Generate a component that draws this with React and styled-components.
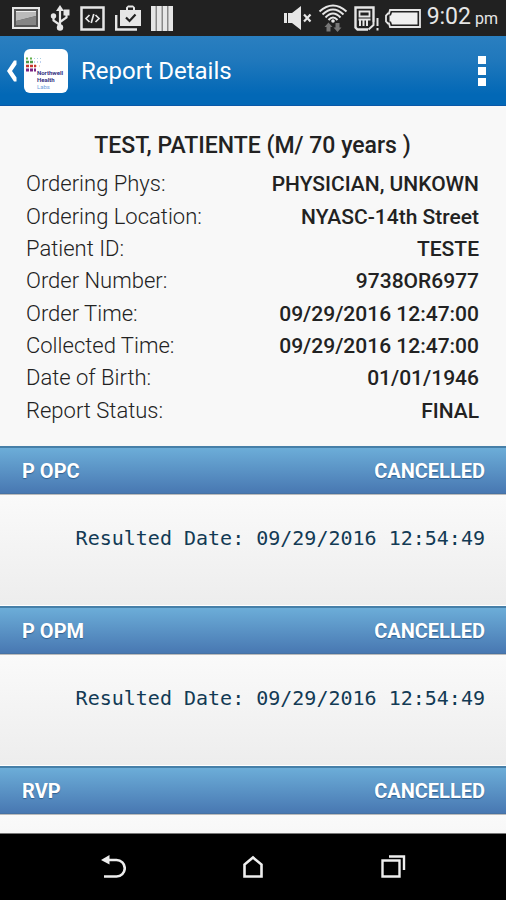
import React from "react";
import styled, { createGlobalStyle } from "styled-components";

const GlobalStyle = createGlobalStyle`
  * { box-sizing: border-box; }
  body {
    margin: 0;
    background: #000;
    font-family: Roboto, "Noto Sans", sans-serif;
  }
  button {
    border: 0;
    padding: 0;
    background: none;
    color: inherit;
    font: inherit;
    cursor: pointer;
  }
`;

const Screen = styled.div`
  display: flex;
  flex-direction: column;
  height: 100vh;
  background: #f8f8f8;
`;

const StatusBar = styled.div`
  display: flex;
  flex: none;
  align-items: center;
  justify-content: space-between;
  height: 36px;
  padding: 0 8px 0 12px;
  background: #212121;
  color: #e6e6e6;
`;

const StatusGroup = styled.div`
  display: flex;
  align-items: center;
  gap: ${(props) => props.$gap};

  svg {
    display: block;
  }
`;

const Clock = styled.span`
  font-size: 23px;
  line-height: 32px;

  small {
    margin-left: 4px;
    font-size: 16px;
  }
`;

const Header = styled.header`
  display: flex;
  flex: none;
  align-items: center;
  height: 70px;
  padding: 0 16px 0 6px;
  border-bottom: 1px solid #0a58a8;
  background: linear-gradient(#2a7fc0, #2078bc 35%, #0268b6 85%);
  color: #fff;
`;

const BackButton = styled.button`
  display: flex;
  align-items: center;
  gap: 6px;
`;

const Logo = styled.span`
  display: grid;
  align-content: start;
  width: 44px;
  height: 44px;
  padding: 8px 2px;
  border-radius: 6px;
  background: #fff;
`;

const LogoText = styled.span`
  display: grid;
  margin: -4px 0 0 11px;
  color: #33307f;
  font-size: 6px;
  font-weight: 700;
  line-height: 7px;
  text-align: left;

  em {
    color: #6fa0dc;
    font-style: normal;
    font-weight: 400;
  }
`;

const Title = styled.h1`
  flex: 1;
  margin: 0 0 0 13px;
  font-size: 24px;
  font-weight: 400;
  line-height: 32px;
`;

const MenuButton = styled.button`
  display: grid;
  gap: 3px;
  padding: 0 4px;

  i {
    width: 8px;
    height: 8px;
    background: #fff;
  }
`;

const Content = styled.main`
  flex: 1;
  min-height: 0;
  overflow: hidden;
`;

const Patient = styled.section`
  padding: 24px 27px 19px 26px;
  color: #222;
`;

const PatientName = styled.h2`
  margin: 0;
  font-size: 23px;
  font-weight: 500;
  line-height: 32px;
  text-align: center;
`;

const Details = styled.dl`
  display: grid;
  grid-auto-rows: 1fr;
  min-height: 259px;
  margin: 6px 0 0;
`;

const DetailRow = styled.div`
  display: flex;
  align-items: center;
  justify-content: space-between;
  line-height: 32px;

  dt {
    color: #222;
    font-size: 22px;
    font-weight: 300;
  }

  dd {
    margin: 0;
    font-size: 21px;
    font-weight: 500;
  }
`;

const ResultBar = styled.h3`
  display: flex;
  align-items: center;
  justify-content: space-between;
  height: 48px;
  margin: 0;
  padding: 0 21px 0 22px;
  border-top: 2px solid #467fa8;
  border-bottom: 1px solid #4672a4;
  background: linear-gradient(#6cadd8, #4878b2);
  color: #fff;
  font-size: 20px;
  font-weight: 700;
  text-shadow: 0 1px 1px #2d5f8f;
`;

const ResultBody = styled.p`
  height: 112px;
  margin: 0;
  padding: 27px 21px;
  border-top: 1px solid #bbb;
  border-bottom: 1px solid #fff;
  background: linear-gradient(#fafafa, #ededed);
  color: #123a54;
  font-family: "DejaVu Sans Mono", "Liberation Mono", monospace;
  font-size: 20px;
  line-height: 32px;
  text-align: right;
  white-space: nowrap;
`;

const NavBar = styled.nav`
  display: flex;
  flex: none;
  align-items: center;
  justify-content: center;
  gap: 114px;
  height: 67px;
  border-top: 1px solid #777;
  background: #000;
  color: #eee;

  svg {
    display: block;
  }
`;

const details = [
  ["Ordering Phys:", "PHYSICIAN, UNKOWN"],
  ["Ordering Location:", "NYASC-14th Street"],
  ["Patient ID:", "TESTE"],
  ["Order Number:", "9738OR6977"],
  ["Order Time:", "09/29/2016 12:47:00"],
  ["Collected Time:", "09/29/2016 12:47:00"],
  ["Date of Birth:", "01/01/1946"],
  ["Report Status:", "FINAL"],
];

const results = [
  { name: "P OPC", status: "CANCELLED", date: "09/29/2016 12:54:49" },
  { name: "P OPM", status: "CANCELLED", date: "09/29/2016 12:54:49" },
  { name: "RVP", status: "CANCELLED" },
];

const ScreenIcon = () => (
  <svg width="28" height="22" viewBox="0 0 28 22">
    <rect x="1" y="1" width="26" height="20" fill="#555" stroke="#e6e6e6" strokeWidth="2" />
    <path d="M4 4h20v5L4 14z" fill="#bbb" />
    <path d="M4 14l20-5v9H4z" fill="#858585" />
    <path d="M4 4.5h20" stroke="#eee" />
  </svg>
);

const UsbIcon = () => (
  <svg width="20" height="26" viewBox="0 0 20 26" fill="none" stroke="currentColor" strokeWidth="2.2">
    <path d="M10 5v17M10 20l-6.500-4.500V11M10 17l6.500-4.500V8" />
    <path d="M10 0l4 6H6z" fill="currentColor" stroke="none" />
    <circle cx="10" cy="22.5" r="3.2" fill="currentColor" stroke="none" />
    <circle cx="3.5" cy="11" r="2.7" fill="currentColor" stroke="none" />
    <path d="M13.500 4.500h6v6h-6z" fill="currentColor" stroke="none" />
  </svg>
);

const CodeIcon = () => (
  <svg width="25" height="25" viewBox="0 0 25 25" fill="none" stroke="currentColor">
    <rect x="1.5" y="1.5" width="22" height="22" strokeWidth="2.5" />
    <path d="M9.5 9L6 12.5 9.5 16M15.5 9l3.5 3.5-3.5 3.5M13.8 8l-2.6 9" strokeWidth="1.7" />
  </svg>
);

const BagIcon = () => (
  <svg width="26" height="26" viewBox="0 0 26 26">
    <path d="M1.200 10v14.500H22" fill="none" stroke="#e6e6e6" strokeWidth="2.4" />
    <path d="M5 5h6V2.500L13 .5h5l2 2V5h6v16H5zM13 5h5V2.500h-5z" fill="#e6e6e6" fillRule="evenodd" />
    <path d="M11 12.500l3.500 3.500 6-6.500" fill="none" stroke="#212121" strokeWidth="2.200" />
  </svg>
);

const BarsIcon = () => (
  <svg width="22" height="25" viewBox="0 0 22 25" fill="#e6e6e6">
    <rect width="22" height="25" fill="#888" />
    <path d="M0 0h4.500v25H0zM6 0h4.500v25H6zM12 0h4v25h-4zM17.500 0H22v25h-4.500z" />
  </svg>
);

const MuteIcon = () => (
  <svg width="28" height="24" viewBox="0 0 28 24" fill="currentColor">
    <path d="M0 7h3v10H0zM4 7h4l9-7v24l-9-7H4z" />
    <path d="M20 8.500l6.500 7M26.500 8.500l-6.500 7" stroke="currentColor" strokeWidth="2.200" />
  </svg>
);

const WifiIcon = () => (
  <svg width="30" height="28" viewBox="0 0 30 28" fill="none" stroke="#e6e6e6" strokeWidth="2">
    <path d="M1.500 7.500Q15-4.500 28.500 7.500M4.500 10.500Q15 .5 25.500 10.500M7.500 13.500Q15 5.500 22.500 13.500M10.500 16Q15 11 19.500 16" />
    <circle cx="15" cy="17" r="1.800" fill="#e6e6e6" stroke="none" />
    <path d="M10.500 18.500l4 4.500h-2v4.500h-4V23h-2zM19.500 28l-4-4.500h2V19h4v4.500h2z" fill="#777" stroke="none" />
  </svg>
);

const CardIcon = () => (
  <svg width="25" height="25" viewBox="0 0 25 25" fill="none" stroke="currentColor">
    <path d="M14 23.500H3.500l-2-2V1.500h18v14" strokeWidth="2.400" />
    <path d="M5.500 5.500h10v5h-10z" strokeWidth="1.800" />
    <path d="M4.500 13.500h12M6 13v7M9.500 13v7M13 13v7" strokeWidth="2" />
    <path d="M19.500 15v4l-5 4.500M23.500 12v8M23.500 22v2.500" strokeWidth="2" />
  </svg>
);

const BatteryIcon = () => (
  <svg width="36" height="19" viewBox="0 0 36 19">
    <path d="M5 1h30v17H5l-1-3.500H3l-2-2v-6l2-2h1z" fill="none" stroke="#e6e6e6" strokeWidth="1.800" />
    <path d="M7 3.500h25.500v12H7l-1-3H4.500v-6H6z" fill="#eee" />
  </svg>
);

const BackArrow = () => (
  <svg width="12" height="24" viewBox="0 0 12 24" fill="#fff">
    <path d="M8 1.500h2.500v4L6 12l4.500 6.500v4H8L1 12z" />
  </svg>
);

const LogoDots = () => (
  <svg width="16" height="16" viewBox="0 0 16 16">
    <path d="M0 1.500h7" stroke="#63b04b" strokeWidth="2" strokeDasharray="2 2" />
    <path d="M8 1.500h8" stroke="#a9cfe0" strokeDasharray="1 2" />
    <path d="M0 5h7" stroke="#4f9a4a" strokeWidth="2.500" strokeDasharray="3 1" />
    <path d="M8 5h8" stroke="#7fa0dc" strokeDasharray="1 2" />
    <path d="M0 9h10" stroke="#c8362e" strokeWidth="2.500" strokeDasharray="3 1" />
    <path d="M10 9h6" stroke="#e9a07c" strokeDasharray="1 2" />
    <path d="M0 13h10" stroke="#7b2583" strokeWidth="3" strokeDasharray="3 1" />
  </svg>
);

const ReturnIcon = () => (
  <svg width="26" height="24" viewBox="0 0 26 24" fill="none" stroke="currentColor" strokeWidth="2.600">
    <path d="M6 5h10.500a8 8 0 0 1 0 16.500H4" />
    <path d="M9.500 0v9.500L1 5z" fill="currentColor" stroke="none" />
  </svg>
);

const HomeIcon = () => (
  <svg width="26" height="24" viewBox="0 0 26 24" fill="none" stroke="currentColor" strokeWidth="2.600">
    <path d="M4.500 21.500V9.500L13 2.500l8.500 7v12z" />
  </svg>
);

const RecentIcon = () => (
  <svg width="26" height="24" viewBox="0 0 26 24" fill="none" stroke="currentColor" strokeWidth="2.400">
    <path d="M2.500 5.500h17v16h-17z" />
    <path d="M9 1.500h15V15" />
  </svg>
);

export default function App() {
  return (
    <>
      <GlobalStyle />
      <Screen>
        <StatusBar>
          <StatusGroup $gap="10px">
            <ScreenIcon />
            <UsbIcon />
            <CodeIcon />
            <BagIcon />
            <BarsIcon />
          </StatusGroup>
          <StatusGroup $gap="6px">
            <MuteIcon />
            <WifiIcon />
            <CardIcon />
            <BatteryIcon />
            <Clock>
              9:02<small>pm</small>
            </Clock>
          </StatusGroup>
        </StatusBar>

        <Header>
          <BackButton aria-label="Back">
            <BackArrow />
            <Logo>
              <LogoDots />
              <LogoText>
                <span>Northwell</span>
                <span>Health</span>
                <em>Labs</em>
              </LogoText>
            </Logo>
          </BackButton>
          <Title>Report Details</Title>
          <MenuButton aria-label="More options">
            <i />
            <i />
            <i />
          </MenuButton>
        </Header>

        <Content>
          <Patient>
            <PatientName>TEST, PATIENTE (M/ 70 years )</PatientName>
            <Details>
              {details.map(([label, value]) => (
                <DetailRow key={label}>
                  <dt>{label}</dt>
                  <dd>{value}</dd>
                </DetailRow>
              ))}
            </Details>
          </Patient>

          {results.map((result) => (
            <section key={result.name}>
              <ResultBar>
                <span>{result.name}</span>
                <span>{result.status}</span>
              </ResultBar>
              <ResultBody>{result.date && `Resulted Date: ${result.date}`}</ResultBody>
            </section>
          ))}
        </Content>

        <NavBar>
          <button aria-label="Back">
            <ReturnIcon />
          </button>
          <button aria-label="Home">
            <HomeIcon />
          </button>
          <button aria-label="Recent apps">
            <RecentIcon />
          </button>
        </NavBar>
      </Screen>
    </>
  );
}
